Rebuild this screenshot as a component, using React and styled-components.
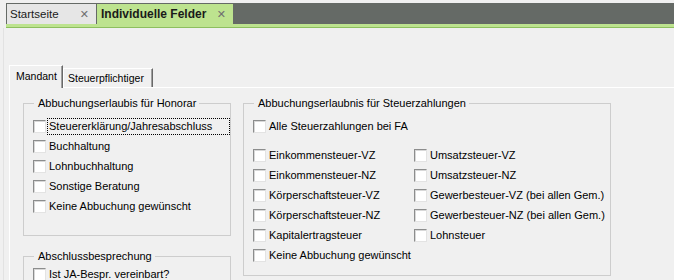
import React from "react";
import styled, { createGlobalStyle } from "styled-components";

const Global = createGlobalStyle`
  html, body { margin: 0; padding: 0; background: #f0f0f0; }
  * { box-sizing: border-box; }
`;

const Page = styled.div`
  font-family: "Liberation Sans", Arial, sans-serif;
  font-size: 11px;
  color: #000;
  background: #f0f0f0;
  height: 280px;
  overflow: hidden;
`;

const Header = styled.div`
  margin-left: 6px;
  padding-top: 3px;
`;

const TabStrip = styled.div`
  display: flex;
  height: 21px;
  background: #656a66;
  padding: 1px 0 0 1px;
  gap: 1px;
`;

const DocTab = styled.div`
  width: ${(p) => p.$w}px;
  display: flex;
  align-items: center;
  justify-content: space-between;
  padding: 0 7px 0 ${(p) => (p.$active ? 4 : 3)}px;
  background: ${(p) => (p.$active ? "#bde38f" : "#e6e6e6")};
  font-weight: ${(p) => (p.$active ? 700 : 400)};
  font-size: ${(p) => (p.$active ? 12 : 11.5)}px;
  color: #1a1a1a;
  white-space: nowrap;
`;

const CloseX = styled.span`
  font-family: "DejaVu Sans", sans-serif;
  font-size: 11px;
  font-weight: 700;
  color: #707070;
`;

const GreenRule = styled.div`
  height: 4px;
  background: #bde38f;
  border-bottom: 1px solid #8dbf5f;
`;

const Content = styled.div`
  margin-left: 3px;
  border-left: 1px solid #e2e2e2;
  padding: 37px 0 0 5px;
  height: 252px;
`;

const InnerTabBar = styled.div`
  display: flex;
  align-items: flex-end;
  height: 22px;
`;

const InnerTab = styled.div`
  position: relative;
  width: ${(p) => p.$w}px;
  height: ${(p) => (p.$active ? 23 : 19)}px;
  margin-bottom: ${(p) => (p.$active ? -1 : 0)}px;
  padding: ${(p) => (p.$active ? "4px 0 0 6px" : "3px 0 0 4px")};
  font-size: 10.5px;
  line-height: 13px;
  background: #f0f0f0;
  border-top: 1px solid #fff;
  border-left: 1px solid #fff;
  border-right: 1px solid #696969;
  box-shadow: inset -1px 0 #a0a0a0;
  z-index: ${(p) => (p.$active ? 2 : 1)};
  white-space: nowrap;
  overflow: hidden;
`;

const Panel = styled.div`
  border-top: 1px solid #fff;
  border-left: 1px solid #fff;
  display: flex;
  align-items: flex-start;
  gap: 12px;
  padding: 9px 0 0 13px;
  height: 200px;
`;

const Column = styled.div`
  display: flex;
  flex-direction: column;
  gap: 14px;
  width: 208px;
`;

const Group = styled.fieldset`
  margin: 0;
  min-width: 0;
  width: ${(p) => p.$w}px;
  padding: 0 0 ${(p) => p.$pb}px 9px;
  border: 1px solid #cdcdcd;
`;

const Legend = styled.legend`
  margin-left: 1px;
  padding: 0 3px 0 4px;
  line-height: 13px;
`;

const List = styled.div`
  display: flex;
  flex-direction: column;
  padding-top: ${(p) => p.$pt || 0}px;
`;

const Cols = styled.div`
  display: flex;
  margin-top: 9px;
`;

const SubCol = styled.div`
  display: flex;
  flex-direction: column;
  width: ${(p) => (p.$w ? `${p.$w}px` : "auto")};
`;

const Row = styled.div`
  display: flex;
  align-items: center;
  height: 20px;
`;

const Box = styled.span`
  flex: none;
  width: 13px;
  height: 13px;
  background: #fff;
  border: 1px solid;
  border-color: #8c8d8d #e3e3e3 #e3e3e3 #8c8d8d;
  box-shadow: inset 1px 1px #d8d8d8;
`;

const Label = styled.span`
  margin-left: 1px;
  padding: 0 1px;
  line-height: 15px;
  white-space: nowrap;
  border: 1px ${(p) => (p.$focused ? "dotted #000" : "solid transparent")};
  width: ${(p) => (p.$width ? `${p.$width}px` : "auto")};
`;

const Check = ({ children, focused, width }) => (
  <Row>
    <Box />
    <Label $focused={focused} $width={width}>
      {children}
    </Label>
  </Row>
);

export default function App() {
  return (
    <Page>
      <Global />
      <Header>
        <TabStrip>
          <DocTab $w={89}>
            <span>Startseite</span>
            <CloseX>✕</CloseX>
          </DocTab>
          <DocTab $w={136} $active>
            <span>Individuelle Felder</span>
            <CloseX>✕</CloseX>
          </DocTab>
        </TabStrip>
        <GreenRule />
      </Header>
      <Content>
        <InnerTabBar>
          <InnerTab $active $w={54}>Mandant</InnerTab>
          <InnerTab $w={90}>Steuerpflichtiger</InnerTab>
        </InnerTabBar>
        <Panel>
          <Column>
            <Group $w={208} $pb={19}>
              <Legend>Abbuchungserlaubis für Honorar</Legend>
              <List $pt={6}>
                <Check focused width={190}>Steuererklärung/Jahresabschluss</Check>
                <Check>Buchhaltung</Check>
                <Check>Lohnbuchhaltung</Check>
                <Check>Sonstige Beratung</Check>
                <Check>Keine Abbuchung gewünscht</Check>
              </List>
            </Group>
            <Group $w={208} $pb={10}>
              <Legend>Abschlussbesprechung</Legend>
              <List $pt={1}>
                <Check>Ist JA-Bespr. vereinbart?</Check>
              </List>
            </Group>
          </Column>
          <Group $w={368} $pb={10}>
            <Legend>Abbuchungserlaubnis für Steuerzahlungen</Legend>
            <List $pt={6}>
              <Check>Alle Steuerzahlungen bei FA</Check>
            </List>
            <Cols>
              <SubCol $w={161}>
                <Check>Einkommensteuer-VZ</Check>
                <Check>Einkommensteuer-NZ</Check>
                <Check>Körperschaftsteuer-VZ</Check>
                <Check>Körperschaftsteuer-NZ</Check>
                <Check>Kapitalertragsteuer</Check>
                <Check>Keine Abbuchung gewünscht</Check>
              </SubCol>
              <SubCol>
                <Check>Umsatzsteuer-VZ</Check>
                <Check>Umsatzsteuer-NZ</Check>
                <Check>Gewerbesteuer-VZ (bei allen Gem.)</Check>
                <Check>Gewerbesteuer-NZ (bei allen Gem.)</Check>
                <Check>Lohnsteuer</Check>
              </SubCol>
            </Cols>
          </Group>
        </Panel>
      </Content>
    </Page>
  );
}
